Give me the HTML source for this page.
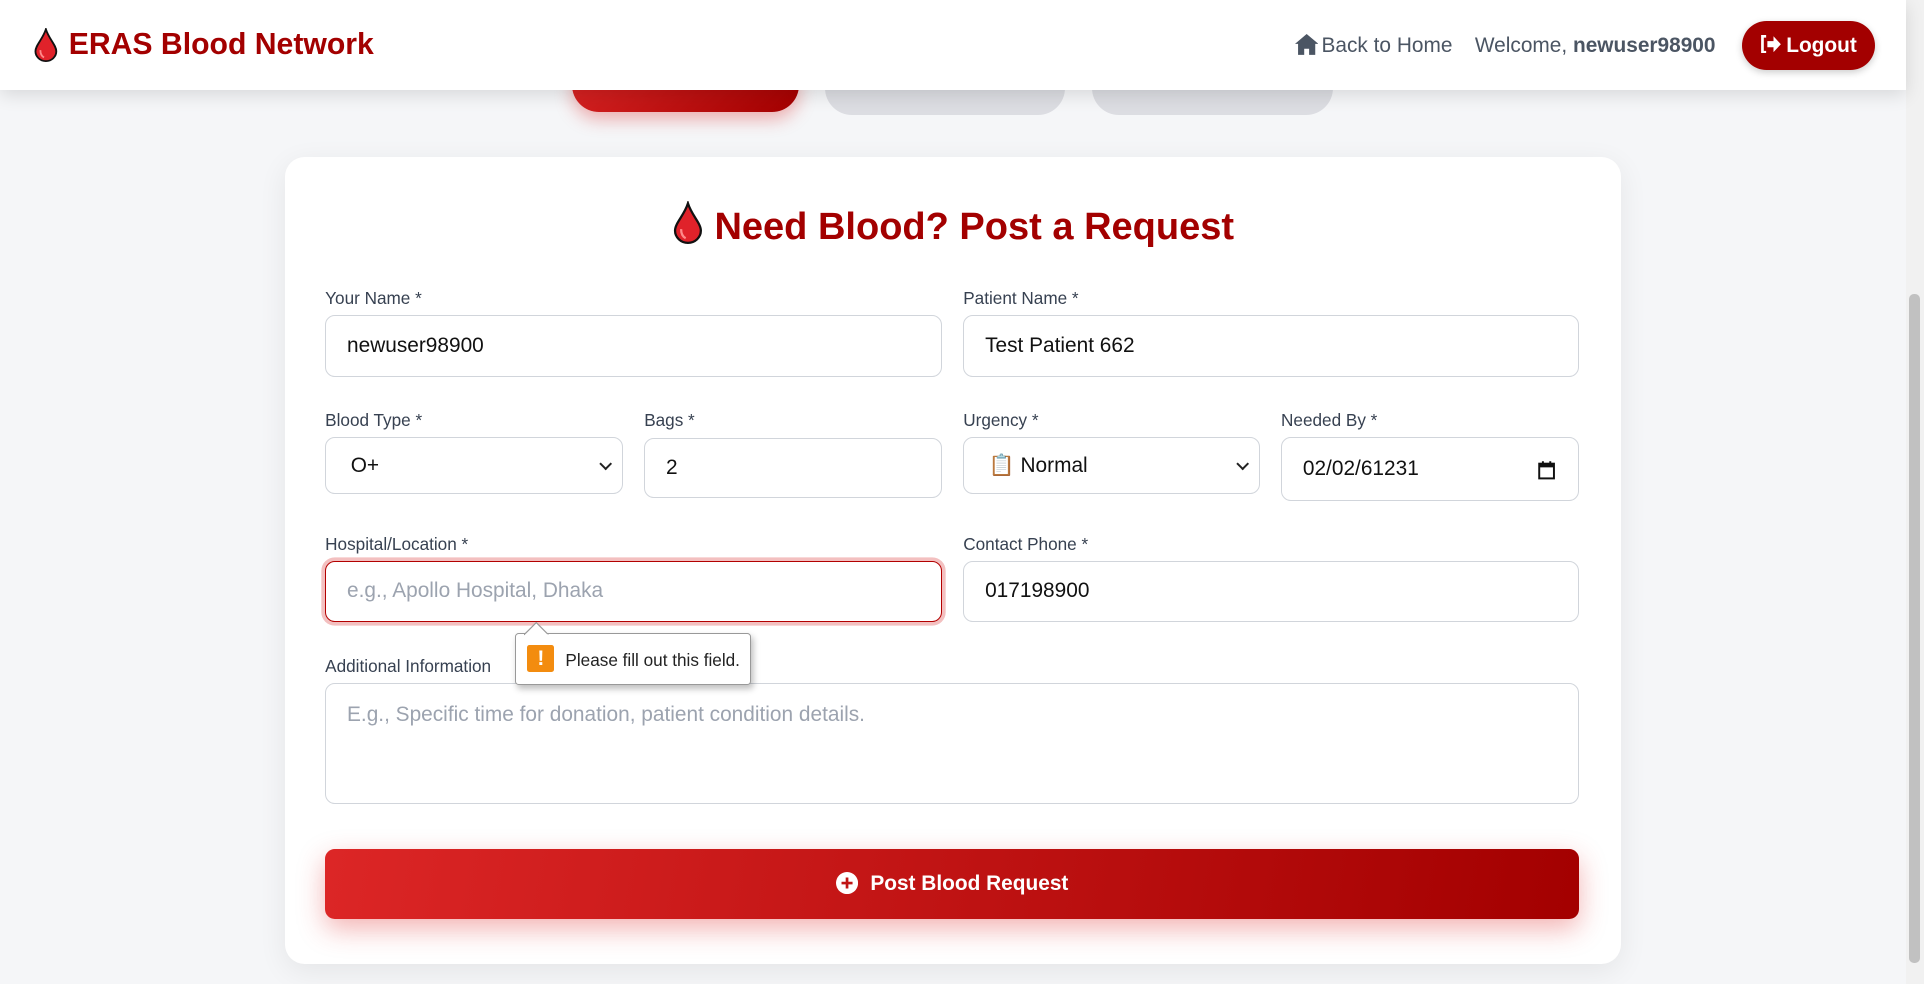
<!DOCTYPE html>
<html><head><meta charset="utf-8"><style>
html,body{margin:0;padding:0;overflow:hidden}
body{width:1924px;height:984px;background:#f5f6f8;font-family:"Liberation Sans",Arial,sans-serif}
#w{zoom:1.22704;width:1568px;height:802px;position:relative;overflow:hidden}
.a{position:absolute}
.hdr{left:0;top:0;width:1553px;height:73px;background:#fff;box-shadow:0 4px 14px rgba(0,0,0,.12);z-index:5}
.pill{top:50px;height:44px;border-radius:22px;background:#dcdde2}
.card{left:232px;top:128px;width:1089px;height:658px;background:#fff;border-radius:16px;box-shadow:0 6px 24px rgba(0,0,0,.07)}
.lab{font-size:14px;color:#374151}
.in{box-sizing:border-box;background:#fff;border:1px solid #d1d5db;border-radius:8px;font-size:17px;color:#111;padding-left:17px;display:flex;align-items:center}
.ph{color:#9ca3af}
.chev{position:absolute;right:10px;top:50%;width:6px;height:6px;border-right:1.8px solid #222;border-bottom:1.8px solid #222;transform:translateY(-70%) rotate(45deg)}
</style></head><body><div id="w">
<div class="a pill" style="left:466px;top:46px;width:185px;height:45px;background:linear-gradient(135deg,#dc2626,#a30000);box-shadow:0 6px 14px rgba(220,38,38,.35)"></div>
<div class="a pill" style="left:672px;width:196px"></div>
<div class="a pill" style="left:890px;width:196px"></div>
<div class="a hdr">
 <svg class="a" style="left:27px;top:23px" width="21" height="28" viewBox="0 0 21 28"><path d="M10.5 1C8 9 2 14 2 19a8.5 8 0 0 0 17 0C19 14 13 9 10.5 1z" fill="#e0222a" stroke="#111" stroke-width="1.5"/><path d="M6 18c0 3 1 5 3 6" stroke="#ff8a8a" stroke-width="1.5" fill="none"/></svg>
 <div class="a" style="left:56px;top:23px;font-size:24.6px;font-weight:bold;color:#a30000">ERAS Blood Network</div>
 <svg class="a" style="left:1055px;top:28px" width="19" height="17" viewBox="0 0 19 17"><path d="M9.5 0L0 8h2.5v9h5v-5h4v5h5V8H19z" fill="#4b5563"/></svg>
 <div class="a" style="left:1077px;top:28px;font-size:17px;color:#4b5563">Back to Home</div>
 <div class="a" style="left:1202px;top:28px;font-size:17px;color:#4b5563">Welcome, <b>newuser98900</b></div>
 <div class="a" style="left:1420px;top:17px;width:108px;height:40px;border-radius:20px;background:#a30000;color:#fff;font-weight:bold;font-size:17px;line-height:40px;text-align:center;box-shadow:0 2px 6px rgba(0,0,0,.2)">
  <svg width="17" height="15" viewBox="0 0 17 15" style="vertical-align:-1px;margin-right:4px"><path d="M5 1H2v13h3" stroke="#fff" stroke-width="2.2" fill="none"/><path d="M6 5h5V1l6 6.5-6 6.5V10H6z" fill="#fff"/></svg>Logout</div>
</div>
<div class="a" style="left:1553px;top:0;width:15px;height:802px;background:#f1f1f1"></div>
<div class="a" style="left:1556px;top:240px;width:9px;height:545px;background:#c1c1c1;border-radius:4px"></div>
<div class="card a"></div>
<div class="a" style="left:0;width:1553px;top:164px;text-align:center;font-size:31px;font-weight:bold;color:#a30000">
 <svg width="26" height="36" viewBox="0 0 21 28" style="vertical-align:-5px;margin-right:9px"><path d="M10.5 1C8 9 2 14 2 19a8.5 8 0 0 0 17 0C19 14 13 9 10.5 1z" fill="#e0222a" stroke="#111" stroke-width="1.5"/><path d="M6 18c0 3 1 5 3 6" stroke="#ff8a8a" stroke-width="1.5" fill="none"/></svg>Need Blood? Post a Request</div>

<div class="a lab" style="left:265px;top:235px">Your Name *</div>
<div class="a lab" style="left:785px;top:235px">Patient Name *</div>
<div class="a in" style="left:265px;top:257px;width:503px;height:50px">newuser98900</div>
<div class="a in" style="left:785px;top:257px;width:502px;height:50px">Test Patient 662</div>

<div class="a lab" style="left:265px;top:334px">Blood Type *</div>
<div class="a lab" style="left:525px;top:334px">Bags *</div>
<div class="a lab" style="left:785px;top:334px">Urgency *</div>
<div class="a lab" style="left:1044px;top:334px">Needed By *</div>
<div class="a in" style="left:265px;top:356px;width:243px;height:47px;padding-left:20px">O+<i class="chev"></i></div>
<div class="a in" style="left:525px;top:357px;width:243px;height:49px">2</div>
<div class="a in" style="left:785px;top:356px;width:242px;height:47px;padding-left:20px">📋&nbsp;Normal<i class="chev"></i></div>
<div class="a in" style="left:1044px;top:356px;width:243px;height:52px">02/02/61231
 <svg class="a" style="right:19px;top:18px" width="14" height="16" viewBox="0 0 14 16"><rect x="1" y="3" width="12" height="12" fill="none" stroke="#111" stroke-width="1.6"/><rect x="1" y="3" width="12" height="3" fill="#111"/><path d="M4 1v3M10 1v3" stroke="#111" stroke-width="1.6"/></svg></div>

<div class="a lab" style="left:265px;top:435px">Hospital/Location *</div>
<div class="a lab" style="left:785px;top:435px">Contact Phone *</div>
<div class="a in ph" style="left:265px;top:457px;width:503px;height:50px;border:1.5px solid #b30000;box-shadow:0 0 0 3px #f3c0c0">e.g., Apollo Hospital, Dhaka</div>
<div class="a in" style="left:785px;top:457px;width:502px;height:50px">017198900</div>

<div class="a lab" style="left:265px;top:535px">Additional Information</div>
<div class="a in ph" style="left:265px;top:557px;width:1022px;height:98px;align-items:flex-start;padding-top:15px">E.g., Specific time for donation, patient condition details.</div>

<div class="a" style="left:420px;top:516px;width:192px;height:42px;box-sizing:border-box;background:#fff;border:1px solid #999;border-radius:3px;box-shadow:2px 3px 5px rgba(0,0,0,.25);font-size:14px;color:#222">
 <div class="a" style="left:9px;top:9px;width:22px;height:22px;background:#f38c0f;border-radius:2px;color:#fff;font-weight:bold;text-align:center;line-height:22px;font-size:17px">!</div>
 <div class="a" style="left:40px;top:13px">Please fill out this field.</div>
</div>
<svg class="a" style="left:427px;top:507px" width="22" height="11" viewBox="0 0 22 11"><path d="M0 10.5L10 0.5L20 10.5" fill="#fff" stroke="#999"/><rect x="1" y="10" width="19" height="2" fill="#fff"/></svg>

<div class="a" style="left:265px;top:692px;width:1022px;height:57px;border-radius:8px;background:linear-gradient(100deg,#dc2626,#a30000);box-shadow:0 8px 22px rgba(220,38,38,.35);color:#fff;font-weight:bold;font-size:17px;line-height:57px;text-align:center">
 <svg width="18" height="18" viewBox="0 0 18 18" style="vertical-align:-3px;margin-right:10px"><circle cx="9" cy="9" r="9" fill="#fff"/><path d="M9 4.5v9M4.5 9h9" stroke="#c01515" stroke-width="2.2"/></svg>Post Blood Request</div>
</div></body></html>
